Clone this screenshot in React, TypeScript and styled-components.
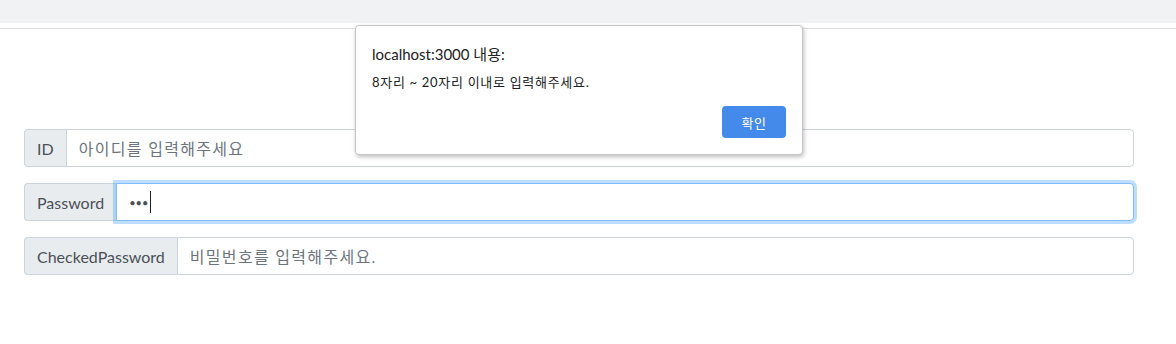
import React from "react";
import styled, { createGlobalStyle } from "styled-components";

const GlobalStyle = createGlobalStyle`
  * { box-sizing: border-box; }
  body {
    margin: 0;
    background: #fff;
    font-family: Lato, "Noto Sans CJK KR", sans-serif;
    color: #212529;
  }
`;

const Page = styled.div`
  position: relative;
  width: 1176px;
  height: 344px;
  overflow: hidden;
`;

const TopBar = styled.div`
  height: 23px;
  background: #f1f2f4;
`;

const Divider = styled.div`
  margin-top: 5px;
  height: 1px;
  background: #dcdcdc;
`;

const Form = styled.div`
  display: flex;
  flex-direction: column;
  gap: 16px;
  width: 1110px;
  margin: 100px 0 0 24px;
`;

const InputGroup = styled.div`
  display: flex;
  height: 38px;
`;

const Label = styled.span`
  display: flex;
  align-items: center;
  padding: 0 12px;
  font-size: 16px;
  color: #495057;
  background: #e9ecef;
  border: 1px solid #ced4da;
  border-right: none;
  border-radius: 4px 0 0 4px;
  white-space: nowrap;
`;

const Field = styled.div<{ $focused?: boolean }>`
  flex: 1;
  display: flex;
  align-items: center;
  padding: 0 12px;
  font-size: 16px;
  letter-spacing: 1.3px;
  color: #6c757d;
  background: #fff;
  border: 1px solid ${({ $focused }) => ($focused ? "#80bdff" : "#ced4da")};
  border-radius: 0 4px 4px 0;
  box-shadow: ${({ $focused }) =>
    $focused ? "0 0 0 3px rgba(0, 123, 255, 0.25)" : "none"};
  z-index: ${({ $focused }) => ($focused ? 1 : 0)};
`;

const Dots = styled.span`
  color: #495057;
  font-size: 11px;
  letter-spacing: 0;
`;

const Caret = styled.span`
  display: inline-block;
  width: 1px;
  height: 22px;
  margin-left: 2px;
  background: #222;
`;

const Dialog = styled.div`
  position: absolute;
  left: 355px;
  top: 25px;
  width: 448px;
  height: 130px;
  padding: 18px 16px 16px 16px;
  background: #fff;
  border: 1px solid #c6c6c6;
  border-radius: 4px;
  box-shadow: 1px 2px 4px rgba(0, 0, 0, 0.25);
  z-index: 5;
  display: flex;
  flex-direction: column;
`;

const DialogTitle = styled.div`
  font-size: 15px;
  color: #202124;
  line-height: 20px;
`;

const DialogMessage = styled.div`
  margin-top: 9px;
  font-size: 13px;
  letter-spacing: 0.7px;
  color: #202124;
  line-height: 18px;
`;

const DialogActions = styled.div`
  margin-top: auto;
  display: flex;
  justify-content: flex-end;
`;

const OkButton = styled.button`
  width: 64px;
  height: 32px;
  border: none;
  border-radius: 4px;
  background: #448aea;
  color: #fff;
  font-family: Lato, "Noto Sans CJK KR", sans-serif;
  font-size: 13px;
  letter-spacing: 0.5px;
`;

export default function App() {
  return (
    <Page>
      <GlobalStyle />
      <TopBar />
      <Divider />
      <Form>
        <InputGroup>
          <Label>ID</Label>
          <Field>아이디를 입력해주세요</Field>
        </InputGroup>
        <InputGroup>
          <Label>Password</Label>
          <Field $focused>
            <Dots>•••</Dots>
            <Caret />
          </Field>
        </InputGroup>
        <InputGroup>
          <Label>CheckedPassword</Label>
          <Field>비밀번호를 입력해주세요.</Field>
        </InputGroup>
      </Form>
      <Dialog>
        <DialogTitle>localhost:3000 내용:</DialogTitle>
        <DialogMessage>8자리 ~ 20자리 이내로 입력해주세요.</DialogMessage>
        <DialogActions>
          <OkButton>확인</OkButton>
        </DialogActions>
      </Dialog>
    </Page>
  );
}
